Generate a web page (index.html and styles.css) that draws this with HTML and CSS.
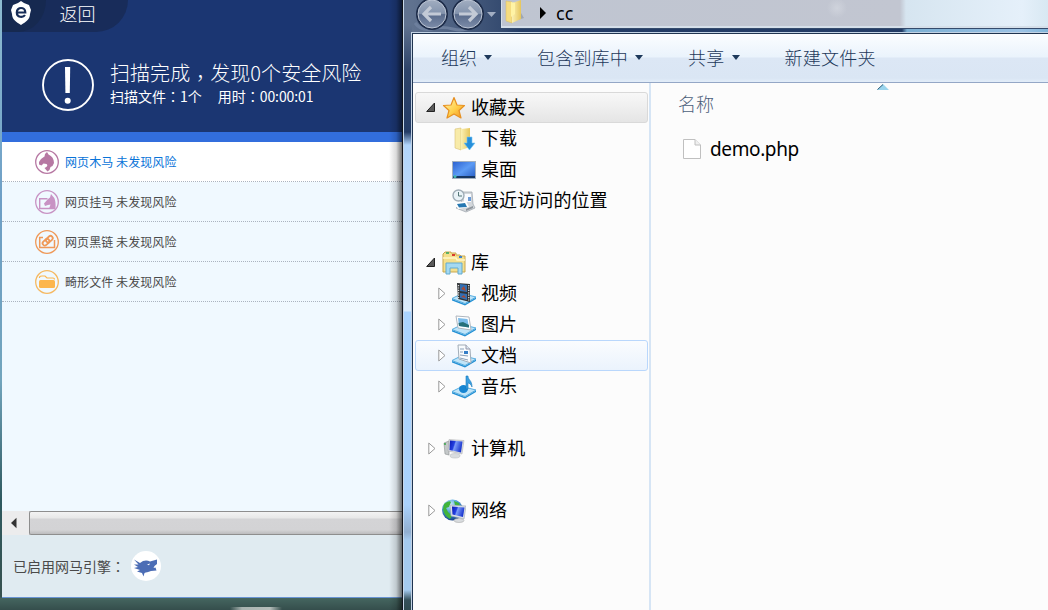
FILE: index.html
```html
<!DOCTYPE html>
<html lang="zh-CN">
<head>
<meta charset="utf-8">
<title>cc</title>
<link rel="stylesheet" href="styles.css">
</head>
<body>
<svg width="0" height="0" class="defs" aria-hidden="true">
  <defs>
    <linearGradient id="gold" x1="0" y1="0" x2="1" y2="1"><stop offset="0" stop-color="#fff6b8"/><stop offset=".55" stop-color="#ffd04a"/><stop offset="1" stop-color="#f08a1c"/></linearGradient>
    <linearGradient id="paper" x1="0" y1="0" x2="1" y2="0"><stop offset="0" stop-color="#fbf0b4"/><stop offset="1" stop-color="#e6c65c"/></linearGradient>
    <linearGradient id="screen" x1="0" y1="0" x2="1" y2="1"><stop offset="0" stop-color="#2a5fcf"/><stop offset=".5" stop-color="#5c9bf5"/><stop offset="1" stop-color="#2459c0"/></linearGradient>
    <linearGradient id="lcd" x1="0" y1="0" x2="1" y2=".3"><stop offset="0" stop-color="#0a17b0"/><stop offset=".4" stop-color="#2440e0"/><stop offset=".5" stop-color="#7d9cf8"/><stop offset="1" stop-color="#1c38d0"/></linearGradient>
    <linearGradient id="orb" x1="0" y1="0" x2="0" y2="1"><stop offset="0" stop-color="#a3afc2"/><stop offset=".48" stop-color="#8494ad"/><stop offset=".52" stop-color="#596b8b"/><stop offset="1" stop-color="#7f8fab"/></linearGradient>
    <radialGradient id="globe" cx=".4" cy=".25" r=".8"><stop offset="0" stop-color="#d5f2ff"/><stop offset=".45" stop-color="#4a9fd8"/><stop offset="1" stop-color="#123a80"/></radialGradient>
    <g id="tray"><path d="M0 16.500L10 11.500 24 15 13 21.500Z" fill="#bfe4f8" stroke="#58aee0"/><path d="M0 17L13 22 24 15.500V17L13 23.500 0 18.500Z" fill="#2390d4"/></g>
    <g id="open"><path d="M.7 9.500H8.500V1Z" fill="#595959" stroke="#222"/></g>
    <g id="closed"><path d="M.8 1V12L7 6.500Z" fill="#fff" stroke="#9a9a9a"/></g>
  </defs>
</svg>
<div class="desktop">
  <section class="scanner">
    <header class="head">
      <div class="back"><span class="logo"><svg width="22" height="26" viewBox="0 0 22 26"><path d="M11 1L14 3 19 5 21 10 20 14C20 19 16 22 11 25 6 22 2 19 2 14L1 10 3 5 8 3Z" fill="#fff"/><path d="M6.800 12.500H15.300C15.300 6.500 6.800 6.500 6.800 12.500C6.800 17.600 13 18 15 15" fill="none" stroke="#172c57" stroke-width="2.200"/></svg></span><span class="backtext">返回</span></div>
      <div class="summary">
        <svg width="52" height="52" viewBox="0 0 52 52"><circle cx="26" cy="26" r="25" fill="none" stroke="#fff" stroke-width="1.900"/><path d="M23 8H28.200L27.800 34H23.400Z" fill="#fff"/><circle cx="25.700" cy="41.700" r="3" fill="#fff"/></svg>
        <div><div class="title"><span>扫描完成</span><span class="comma" lang="zh-TW">，</span><span>发现0个安全风险</span></div><div class="sub"><span>扫描文件<span class="colon" lang="zh-TW">：</span>1个</span><span>用时<span class="colon" lang="zh-TW">：</span><span class="time">00:00:01</span></span></div></div>
      </div>
    </header>
    <ul class="results">
      <li class="result active"><svg width="24" height="24" viewBox="0 0 24 24"><circle cx="12" cy="12" r="11.300" fill="#fff" stroke="#b778a3" stroke-width="1.300"/><path d="M4 12L6 9 9.500 6.500 10 4 12 2 13.500 4.500C17 6 19 9 19 13L17.500 16 15.500 17 14.500 20 12.500 21.500 9.500 18C12.500 17 13 15 11.500 14L8.500 13.500 6.500 15.500 4 14.500Z" fill="#b778a3"/></svg>网页木马 未发现风险</li>
      <li class="result"><svg width="24" height="24" viewBox="0 0 24 24"><circle cx="12" cy="12" r="11.300" fill="none" stroke="#c893c4" stroke-width="1.300"/><path d="M12.500 8.700H4.700V18.500H20" fill="none" stroke="#c893c4" stroke-width="1.400"/><path d="M9 13.500L13 9 15 7.500 16 4 18 6.500C20 8 21 12 20.500 19H14L15.500 14.500 13 15 10 16Z" fill="#c893c4"/></svg>网页挂马 未发现风险</li>
      <li class="result"><svg width="24" height="24" viewBox="0 0 24 24" fill="none" stroke="#ef9958"><circle cx="12" cy="12" r="11.300" stroke-width="1.300"/><path d="M8 7.500H4.700V17.500H19.500V10" stroke-width="1.500"/><g transform="rotate(-42 12.500 10.500)" stroke-width="1.800"><rect x="6.500" y="8.500" width="7.500" height="4.500" rx="2.200"/><rect x="11" y="8.500" width="7.500" height="4.500" rx="2.200"/></g></svg>网页黑链 未发现风险</li>
      <li class="result"><svg width="24" height="24" viewBox="0 0 24 24"><circle cx="12" cy="12" r="11.300" fill="none" stroke="#f5b962" stroke-width="1.300"/><path d="M4.500 8V7Q5 6 7 6H10L12 8H18Q19.500 8 19.500 9.500" fill="none" stroke="#fcb64d" stroke-width="1.200"/><rect x="4" y="10" width="16" height="8" rx="1.500" fill="#fcb64d"/></svg>畸形文件 未发现风险</li>
    </ul>
    <div class="scroll"><span class="arrow"><svg width="8" height="12" viewBox="0 0 8 12"><path d="M1 6L6.500 .8V11.200Z" fill="#333"/></svg></span><span class="thumb"></span></div>
    <footer class="foot"><span>已启用网马引擎<span class="colon" lang="zh-TW">：</span></span><svg width="30" height="30" viewBox="0 0 30 30"><circle cx="15" cy="15" r="15" fill="#fff"/><path d="M3 8.500L9 12 12 10C15 9 17 9.500 19 10.500L26 8.500V13L23.500 15 22.500 17 24.500 16.500 25.500 19.500 20 20C17 21.500 15 21 13.500 22L12.500 25.500 11 22 6 20.500 9 19 3 17 7 16 3 13.500 7.500 13.500Z" fill="#4c6db5"/><path d="M16 13.500L19 12.500 18 14.300Z" fill="#fff"/></svg></footer>
  </section>
  <section class="explorer">
    <div class="caption">
      <svg class="nav" width="98" height="32" viewBox="0 0 98 32"><path d="M11 23Q17 31 27 29 38 26 49 29 60 32 68 26" fill="none" stroke="#6d7f9d" stroke-width="3"/><g fill="url(#orb)" stroke="#1d2c49" stroke-width="2"><circle cx="28" cy="14" r="15"/><circle cx="64" cy="14" r="15"/></g><g fill="none" stroke="#bdc6d5" stroke-width="1"><circle cx="28" cy="14" r="14"/><circle cx="64" cy="14" r="14"/></g><path d="M37 14H20M27 7L20 14 27 21M55 14H72M65 7L72 14 65 21" fill="none" stroke="#c3cad6" stroke-width="3.200"/><path d="M83 12H92L87.500 17Z" fill="#a2aec3"/></svg>
      <div class="address"><svg width="24" height="26" viewBox="0 0 24 26"><path d="M12 22L22 19 19 14 13 22Z" fill="#8b929c" opacity=".6"/><path d="M4 2L10 3V24L4 22Z" fill="#f5dc80" stroke="#d9bf62" stroke-width=".5"/><path d="M10 4L19 1V20L10 24Z" fill="url(#paper)"/><path d="M9 3L13 4V15L9 18Z" fill="#fff3a5"/></svg><svg class="crumb" width="8" height="12" viewBox="0 0 8 12"><path d="M1 0L7 6 1 12Z" fill="#000"/></svg><span>cc</span></div>
    </div>
    <div class="client">
      <nav class="toolbar"><span class="t1">组织<i></i></span><span class="t2">包含到库中<i></i></span><span class="t3">共享<i></i></span><span class="t4">新建文件夹</span></nav>
      <div class="panes">
        <div class="tree">
          <div class="row top sel"><svg class="tw" width="10" height="11"><use href="#open"/></svg><svg class="ic" width="24" height="24" viewBox="0 0 24 24"><path d="M12 1.500L15 9 22.500 9.500 17 14.500 19 22 12 18 5 22 7 14.500 1.500 9.500 9 9Z" fill="url(#gold)" stroke="#e79122" stroke-width="1.200" stroke-linejoin="round"/></svg><span>收藏夹</span></div>
          <div class="row leaf"><svg class="ic" width="24" height="24" viewBox="0 0 24 24"><path d="M3 2L9 1V23L3 21Z" fill="#f8eba9" stroke="#d8c175" stroke-width=".6"/><path d="M9 2L18 1V20L9 23Z" fill="url(#paper)"/><path d="M15 10H20V16H23L17.500 23 12 16H15Z" fill="#278fda" stroke="#76c7f5" stroke-width=".6"/></svg><span>下载</span></div>
          <div class="row leaf"><svg class="ic" width="24" height="24" viewBox="0 0 24 24"><rect x=".5" y="3.500" width="23" height="17" fill="url(#screen)" stroke="#a3b0be"/><path d="M1 18H23V20H1Z" fill="#173762"/><circle cx="3" cy="18.500" r="1.500" fill="#42b7b0"/></svg><span>桌面</span></div>
          <div class="row leaf"><svg class="ic" width="24" height="24" viewBox="0 0 24 24"><path d="M11 3H20L21 15 23 19 14 23 4 19 9 15Z" fill="#d3d7db" stroke="#9aa1a9" stroke-width=".7"/><path d="M12 5H19V13H12Z" fill="#f9fbff"/><path d="M16 8H19V12H16Z" fill="#6b9bd6"/><path d="M3 14L14 12 17 18 6 20Z" fill="#fff"/><path d="M5 15L13 14 15 18 7 18.500Z" fill="#2678b2"/><path d="M14 20L21 17V19L14 22Z" fill="#8f969d"/><circle cx="6.500" cy="6.500" r="5.500" fill="#e9f2f7" stroke="#a0adb7" stroke-width="1.400"/><path d="M6.500 3V7H10" fill="none" stroke="#577"/></svg><span>最近访问的位置</span></div>
          <div class="row"></div>
          <div class="row top"><svg class="tw" width="10" height="11"><use href="#open"/></svg><svg class="ic" width="24" height="24" viewBox="0 0 24 24"><path d="M1 3L3 1H9V2H14V4H18L19 5H23V21H1Z" fill="#f4df8d" stroke="#c8a74e"/><path d="M1 7H14L15 9H23" stroke="#fff8c9" fill="none" stroke-width="1.500"/><path d="M4 2H7" stroke="#2da45f" stroke-width="1.500"/><path d="M10 4H13" stroke="#d83b30" stroke-width="2"/><path d="M17 6H20" stroke="#3c83cf" stroke-width="2"/><path d="M4 12H20V23H16V17H8V23H4Z" fill="#a4d9f2" stroke="#62abcf"/></svg><span>库</span></div>
          <div class="row leaf"><svg class="tw" width="10" height="13"><use href="#closed"/></svg><svg class="ic" width="24" height="24" viewBox="0 0 24 24"><use href="#tray"/><path d="M5 1L18 2V20L6 17Z" fill="#303438"/><path d="M8 2L15 3V10L8 9ZM8 11L15 12V18L8 16Z" fill="#326fb3"/><path d="M9 7L12 4 14 9ZM9 15L12 13 14 16Z" fill="#a54c37"/><path d="M6.500 3V17M16.700 3V19" stroke="#ddd" stroke-width="1.300" stroke-dasharray="1.200 1.200"/></svg><span>视频</span></div>
          <div class="row leaf"><svg class="tw" width="10" height="13"><use href="#closed"/></svg><svg class="ic" width="24" height="24" viewBox="0 0 24 24"><use href="#tray"/><path d="M4 3L17 4 19 17 6 15Z" fill="#fff" stroke="#aeb6bf"/><path d="M6 5L15.500 6 17 14.500 7 13Z" fill="#7bbbe9"/><path d="M6.500 10L11 9 17 12V14.500L7 13Z" fill="#277079"/></svg><span>图片</span></div>
          <div class="row leaf hover"><svg class="tw" width="10" height="13"><use href="#closed"/></svg><svg class="ic" width="24" height="24" viewBox="0 0 24 24"><use href="#tray"/><path d="M6 1L14 1 18 5 19 19 7 15Z" fill="#f8fbfd" stroke="#a2adb8"/><path d="M14 1V5H18" fill="#dbe8f2" stroke="#99a"/><path d="M8 5H12M8 8H11M8 11L16 12M8 14L16 16" stroke="#8aa0b8"/><path d="M12 7H16V10H12Z" fill="#347ec7"/></svg><span>文档</span></div>
          <div class="row leaf"><svg class="tw" width="10" height="13"><use href="#closed"/></svg><svg class="ic" width="24" height="24" viewBox="0 0 24 24"><use href="#tray"/><ellipse cx="11.500" cy="14" rx="4.500" ry="4" fill="#1685d2"/><path d="M14 1H16C16 5 20 5 20 12C19 9 17 8 16 8V14H14Z" fill="#3a9fe0" stroke="#1678bc" stroke-width=".6"/></svg><span>音乐</span></div>
          <div class="row"></div>
          <div class="row top"><svg class="tw" width="10" height="13"><use href="#closed"/></svg><svg class="ic" width="24" height="24" viewBox="0 0 24 24"><path d="M2 6L7 4V18L3 17Z" fill="#c4c8c9" stroke="#898e91" stroke-width=".6"/><path d="M3 6V8" stroke="#38a548" stroke-width="1.500"/><path d="M7 2.500L22 3.500 20 17 6 14Z" fill="#d6d9df" stroke="#aaa" stroke-width=".5"/><path d="M8 3.500L20.500 4.500 19 15.500 7.500 13Z" fill="url(#lcd)"/><ellipse cx="13" cy="18.800" rx="5" ry="2.200" fill="#d9dcdf" stroke="#b8bdc0" stroke-width=".6"/></svg><span>计算机</span></div>
          <div class="row"></div>
          <div class="row top"><svg class="tw" width="10" height="13"><use href="#closed"/></svg><svg class="ic" width="24" height="24" viewBox="0 0 24 24"><circle cx="10.500" cy="11" r="10.500" fill="url(#globe)"/><path d="M2 5Q7 1 9 3L7 8 4 9 6 13 10 17 8 20Q2 17 1 10ZM12 2L17 4 18 8 13 6Z" fill="#41b43b"/><path d="M8 6L24 7 22 20 9 17Z" fill="#dadfe6" stroke="#9ca6b4" stroke-width=".6"/><path d="M10 7.500L22.500 8.500 21 18 10.500 15.500Z" fill="url(#lcd)"/><ellipse cx="17" cy="21.500" rx="5" ry="2" fill="#d9dcdf" stroke="#aaa" stroke-width=".6"/></svg><span>网络</span></div>
        </div>
        <div class="files">
          <div class="colhead"><span>名称</span><svg width="12" height="6" viewBox="0 0 12 6"><path d="M0 6L6 0 12 6Z" fill="#9bd5ed"/><path d="M.5 5.500L6 .5" stroke="#2f5d78"/></svg></div>
          <div class="file"><svg width="18" height="20" viewBox="0 0 18 20"><path d="M.5 .5H12L17.500 6V19.500H.5Z" fill="#fff" stroke="#c0c0c0"/><path d="M12 .5V6H17.500" fill="#f0f0f0" stroke="#c0c0c0"/></svg><span>demo.php</span></div>
        </div>
      </div>
    </div>
  </section>
</div>
</body>
</html>
```
FILE: styles.css
```css
* { box-sizing: border-box; }
body { margin: 0; width: 1048px; height: 610px; overflow: hidden; font-family: "Noto Sans CJK SC", sans-serif; font-weight: 400; }
svg { flex: none; display: block; }
.defs { position: absolute; }
.desktop { display: flex; width: 1048px; height: 610px; padding-left: 2px; background: linear-gradient(90deg, transparent 230px, #a9b3b0 242px, #b5bdba 270px, transparent 282px) 0 607px / 100% 3px no-repeat, linear-gradient(#8dbbd0 0, #6e9fc6 200px, #72a5bd 380px, #2f5a60 500px, #37514f 597px, #456660 598px, #354e4c); }
.scanner { position: relative; width: 400px; height: 598px; display: flex; flex-direction: column; border-bottom: 1px solid #6994d4; background: #f0f9ff; }
.scanner::after { content: ""; position: absolute; right: 0; top: 0; width: 13px; height: 610px; background: linear-gradient(90deg, transparent, rgba(0,0,0,.14) 55%, rgba(0,0,0,.55)); }
.head { height: 142px; background: #1b3672; border-bottom: 10px solid #326edd; }
.back { display: flex; align-items: center; width: 126px; height: 32px; background: #182c5a; border-bottom-right-radius: 32px; color: #fff; font-size: 18px; font-weight: 300; }
.logo { width: 44px; height: 32px; padding-left: 8px; background: #162950; border-bottom-right-radius: 28px 32px; }
.backtext { padding: 0 0 6px 13.5px; line-height: 26px; }
.summary { display: flex; gap: 16px; padding: 27px 0 0 40px; color: #fff; font-weight: 300; }
.title { display: flex; height: 27px; font-size: 20px; line-height: 27px; letter-spacing: .05px; white-space: nowrap; }
.comma { padding-top: 5px; }
.sub { display: flex; gap: 16px; font-size: 14px; line-height: 20px; font-weight: 400; }
.time { letter-spacing: -.1px; }
.comma, .colon { font-family: "Noto Sans CJK TC", sans-serif; }
.results { list-style: none; margin: 0; padding: 0; flex: 1; }
.result { display: flex; align-items: center; gap: 6px; height: 40px; padding-left: 33px; border-bottom: 1px dotted #abb4c0; color: #4a4a4a; font-size: 12px; letter-spacing: .08px; }
.active { background: #fff; color: #0873d8; }
.scroll { display: flex; height: 24px; background: #ececed; }
.arrow { width: 27px; padding: 6px 0 0 8px; }
.thumb { flex: 1; border: 1px solid #8e8e8e; border-right: 0; border-radius: 2px 0 0 2px; background: linear-gradient(#f3f3f3 0, #e8e8e8 6px, #d4d4d6 7px, #d3d3d5 18px, #bcbcbe); }
.foot { display: flex; align-items: center; gap: 6px; height: 62px; padding-left: 11px; background: #e0ebf1; color: #4a4a4a; font-size: 14px; }
.explorer { width: 646px; height: 610px; display: flex; flex-direction: column; border-left: 1px solid #10141c; padding-left: 9px; background: linear-gradient(90deg, #c7d7e9 1px, transparent 1px), linear-gradient(#60728f 0, #60728f 25px, #2d4369 70px, #243c66 132px, #b1d5fb 145px, #c2dcf8 220px, #dcecfb 311px, #aad4ff 312px, #aad2fc 505px, #91aed0 532px, #a4caef 540px, #a4caef 590px, #35505a 600px, #304a50); }
.caption { display: flex; height: 33px; background: linear-gradient(90deg, #60728f 0, #354b70 90px, #223b65 110px, #223b65 490px, #7bafd3 495px, #9bc2e5 610px, #80b5d9); }
.nav { margin-left: -8px; }
.address { display: flex; align-items: center; flex: 1; height: 28px; margin-left: -1px; padding-bottom: 2px; border: solid #d5dfe9; border-width: 0 0 2px 1px; outline: 1px solid #354b6c; background: radial-gradient(circle at 335px 8px, #cfd3dc 0, transparent 10px), linear-gradient(90deg, #bfc5d1 0, #c2c6d1 398px, #d6e5f0 404px, #e5f0fa 520px, #d8e8f2); font-size: 18px; }
.address span { padding-top: 1px; font-family: "Noto Sans", sans-serif; }
.crumb { margin: 2px 9px 0 13px; }
.client { flex: 1; border: solid #1f3450; border-width: 1px 0 0 1px; outline: 1px solid #c2d2e4; background: #fcfcfc; }
.toolbar { display: flex; align-items: center; height: 49px; padding: 0 0 2px 28px; border-bottom: 1px solid #94a7c6; background: linear-gradient(#fbfdff 0, #eaf3fc 23px, #dce7f5 24px, #dae6f4 44px, #e2edf9); color: #1e395b; font-size: 18px; font-weight: 300; white-space: nowrap; }
.toolbar span { display: flex; align-items: center; }
.toolbar i { margin-left: 7px; border: solid transparent; border-width: 5px 4.5px 0; border-top-color: #1e395b; }
.t1 { margin-right: 45px; }
.t2 { margin-right: 45px; letter-spacing: .2px; }
.t3 { margin-right: 45px; letter-spacing: .3px; }
.t4 { letter-spacing: .2px; }
.panes { display: flex; height: 527px; }
.tree { width: 238px; padding: 9px 1px 0 2px; border-right: 2px solid #d6e5f5; font-size: 18px; color: #000; }
.row { display: flex; align-items: center; height: 31px; border: 1px solid transparent; border-radius: 3px; white-space: nowrap; }
.row span { line-height: 27px; padding-bottom: 2px; letter-spacing: .1px; }
.top { padding-left: 10px; }
.leaf { padding-left: 36px; }
.leaf:has(.tw) { padding-left: 22px; }
.tw { margin-right: 6px; }
.leaf .tw { margin-right: 4px; }
.top .tw:has([href="#closed"]) { margin: 0 4px 0 2px; }
.ic { margin-right: 5px; }
.sel { border-color: #d9d9d9; background: linear-gradient(#f8f8f8, #e5e5e5); }
.hover { border-color: #b9d7fc; background: linear-gradient(#fafcfe, #ebf3fd); }
.files { flex: 1; }
.colhead { display: flex; padding-left: 27px; height: 42px; color: #4c607a; font-size: 18px; font-weight: 300; line-height: 40px; }
.colhead svg { margin: 1px 0 0 163px; }
.file { display: flex; align-items: center; gap: 9px; height: 48px; padding-left: 32px; font-family: "Noto Sans", sans-serif; font-size: 19px; letter-spacing: -.38px; }
.file span { padding-bottom: 1px; }
```
